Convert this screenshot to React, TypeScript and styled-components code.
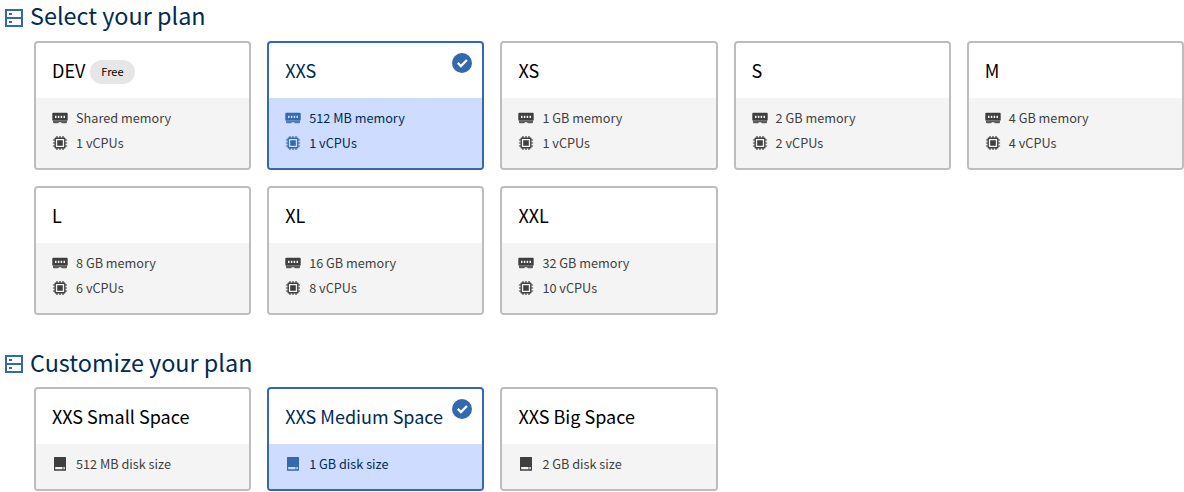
import React from 'react';
import styled, { createGlobalStyle, css } from 'styled-components';

const GlobalStyle = createGlobalStyle`
  * { box-sizing: border-box; }
  body {
    margin: 0;
    background: #fff;
    font-family: "Noto Sans CJK SC", "Noto Sans", sans-serif;
  }
`;

const Page = styled.main`
  height: 492px;
  padding-left: 4px;
`;

const HeadingText = styled.span`
  margin-top: -4px;
`;

const Section = styled.section`
  & + & { margin-top: 31px; }
  & + & ${HeadingText} { margin-top: -2px; }
`;

const Heading = styled.h2`
  display: flex;
  align-items: center;
  height: 34px;
  margin: 0 0 7px;
  color: #002b53;
  font-size: 23.4px;
  font-weight: 400;
  line-height: 30px;
`;

const HeadingIcon = styled.svg`
  flex: none;
  width: 20px;
  height: 20px;
  margin: 2px 6px 0 0;
  color: #3569ad;
`;

const Grid = styled.div`
  display: grid;
  grid-template-columns: repeat(5, 1fr);
  gap: 16px;
  margin-left: 30px;
`;

const Body = styled.ul`
  margin: 0;
  padding: 7px 16px 13px;
  list-style: none;
  background: #f4f4f4;
  color: #3f3f3f;
`;

const SpecIcon = styled.svg`
  flex: none;
  width: 16px;
  height: 16px;
  margin: 1px 8px 0 0;
  color: #3f3f3f;
`;

const Card = styled.article<{ $selected?: boolean }>`
  position: relative;
  overflow: hidden;
  border: 2px solid #bdbdbd;
  border-radius: 4px;
  color: #000;

  ${({ $selected }) => $selected && css`
    border-color: #3569ad;
    color: #002b53;
    ${Body} { background: #cddcff; color: #002b53; }
    ${SpecIcon} { color: #3569ad; }
  `}
`;

const Title = styled.h3`
  display: flex;
  align-items: center;
  height: 55px;
  margin: 0;
  padding: 0 16px 1px;
  font-size: 18px;
  font-weight: 400;
  line-height: 28px;
  white-space: nowrap;
`;

const Tag = styled.span`
  height: 24px;
  margin: 4px 0 0 5px;
  padding: 0 11px;
  border-radius: 12px;
  background: #e6e6e6;
  color: #000;
  font-size: 11px;
  line-height: 22px;
`;

const Spec = styled.li`
  display: flex;
  align-items: center;
  height: 25px;
  font-size: 12.7px;
  line-height: 25px;
`;

const Check = styled.svg`
  position: absolute;
  top: 10px;
  right: 10px;
  width: 20px;
  height: 20px;
`;

type SpecKind = 'memory' | 'cpu' | 'disk';

function Icon({ kind }: { kind: SpecKind }) {
  return (
    <SpecIcon viewBox="0 0 16 16" fill="currentColor">
      {kind === 'memory' && (
        <>
          <path fillRule="evenodd" d="M1.200 2.800h13.600q.9 0 .9.900V10.400H.3V3.700q0-.9.9-.9ZM3 5.800v2.200h1.500V5.800ZM5.850 5.800v2.200h1.500V5.800ZM8.650 5.800v2.200h1.500V5.800ZM11.500 5.800v2.200H13V5.800Z" />
          <path opacity=".85" d="M1 10.400h14v1.900q0 .9-.9.9H9.900L9 12.200H7l-.9 1H1.900q-.9 0-.9-.9Z" />
        </>
      )}
      {kind === 'cpu' && (
        <>
          <path fillRule="evenodd" d="M3.600 2.500h8.800q1.100 0 1.100 1.100v8.800q0 1.100-1.100 1.100H3.600q-1.100 0-1.100-1.100V3.600q0-1.100 1.100-1.100ZM3.900 3.900v8.200h8.200V3.900Z" />
          <path d="M5.200 5.200h5.600v5.600H5.200ZM4.400.9h1.200v2H4.400ZM7.400.9h1.200v2H7.400ZM10.400.9h1.200v2h-1.200ZM4.400 13.100h1.200v2H4.400ZM7.400 13.100h1.200v2H7.400ZM10.400 13.100h1.200v2h-1.200ZM.9 4.400h2v1.200h-2ZM.9 7.400h2v1.200h-2ZM.9 10.400h2v1.200h-2ZM13.100 4.400h2v1.200h-2ZM13.100 7.400h2v1.200h-2ZM13.100 10.400h2v1.200h-2Z" />
        </>
      )}
      {kind === 'disk' && (
        <path fillRule="evenodd" d="M2.500 1h11q.5 0 .5.5v12.700q0 .5-.5.5h-11q-.5 0-.5-.5V1.500Q2 1 2.500 1ZM3.200 11v2.200h7.300V11ZM11.400 11v2.200h1.400V11Z" />
      )}
    </SpecIcon>
  );
}

interface Plan {
  name: string;
  tag?: string;
  selected?: boolean;
  specs: [SpecKind, string][];
}

const plan = (name: string, memory: string, cpus: number, extra: Partial<Plan> = {}): Plan => ({
  name,
  specs: [['memory', `${memory} memory`], ['cpu', `${cpus} vCPUs`]],
  ...extra,
});

const plans: Plan[] = [
  plan('DEV', 'Shared', 1, { tag: 'Free' }),
  plan('XXS', '512 MB', 1, { selected: true }),
  plan('XS', '1 GB', 1),
  plan('S', '2 GB', 2),
  plan('M', '4 GB', 4),
  plan('L', '8 GB', 6),
  plan('XL', '16 GB', 8),
  plan('XXL', '32 GB', 10),
];

const spaces: Plan[] = [
  { name: 'XXS Small Space', specs: [['disk', '512 MB disk size']] },
  { name: 'XXS Medium Space', selected: true, specs: [['disk', '1 GB disk size']] },
  { name: 'XXS Big Space', specs: [['disk', '2 GB disk size']] },
];

function PlanSection({ title, items }: { title: string; items: Plan[] }) {
  return (
    <Section>
      <Heading>
        <HeadingIcon viewBox="0 0 20 20">
          <path d="M2 2h16v16H2ZM2 10h16" fill="none" stroke="currentColor" strokeWidth="2" />
          <path d="M5 5h3v2H5ZM5 13h3v2H5Z" fill="currentColor" />
        </HeadingIcon>
        <HeadingText>{title}</HeadingText>
      </Heading>
      <Grid>
        {items.map((item) => (
          <Card key={item.name} $selected={item.selected}>
            <Title>
              {item.name}
              {item.tag && <Tag>{item.tag}</Tag>}
            </Title>
            <Body>
              {item.specs.map(([kind, label]) => (
                <Spec key={kind}>
                  <Icon kind={kind} />
                  {label}
                </Spec>
              ))}
            </Body>
            {item.selected && (
              <Check viewBox="0 0 20 20">
                <circle cx="10" cy="10" r="10" fill="#3569ad" />
                <path d="m5.800 9.900 3.100 3.100 6-6" fill="none" stroke="#fff" strokeWidth="2.300" />
              </Check>
            )}
          </Card>
        ))}
      </Grid>
    </Section>
  );
}

export default function App() {
  return (
    <>
      <GlobalStyle />
      <Page>
        <PlanSection title="Select your plan" items={plans} />
        <PlanSection title="Customize your plan" items={spaces} />
      </Page>
    </>
  );
}
